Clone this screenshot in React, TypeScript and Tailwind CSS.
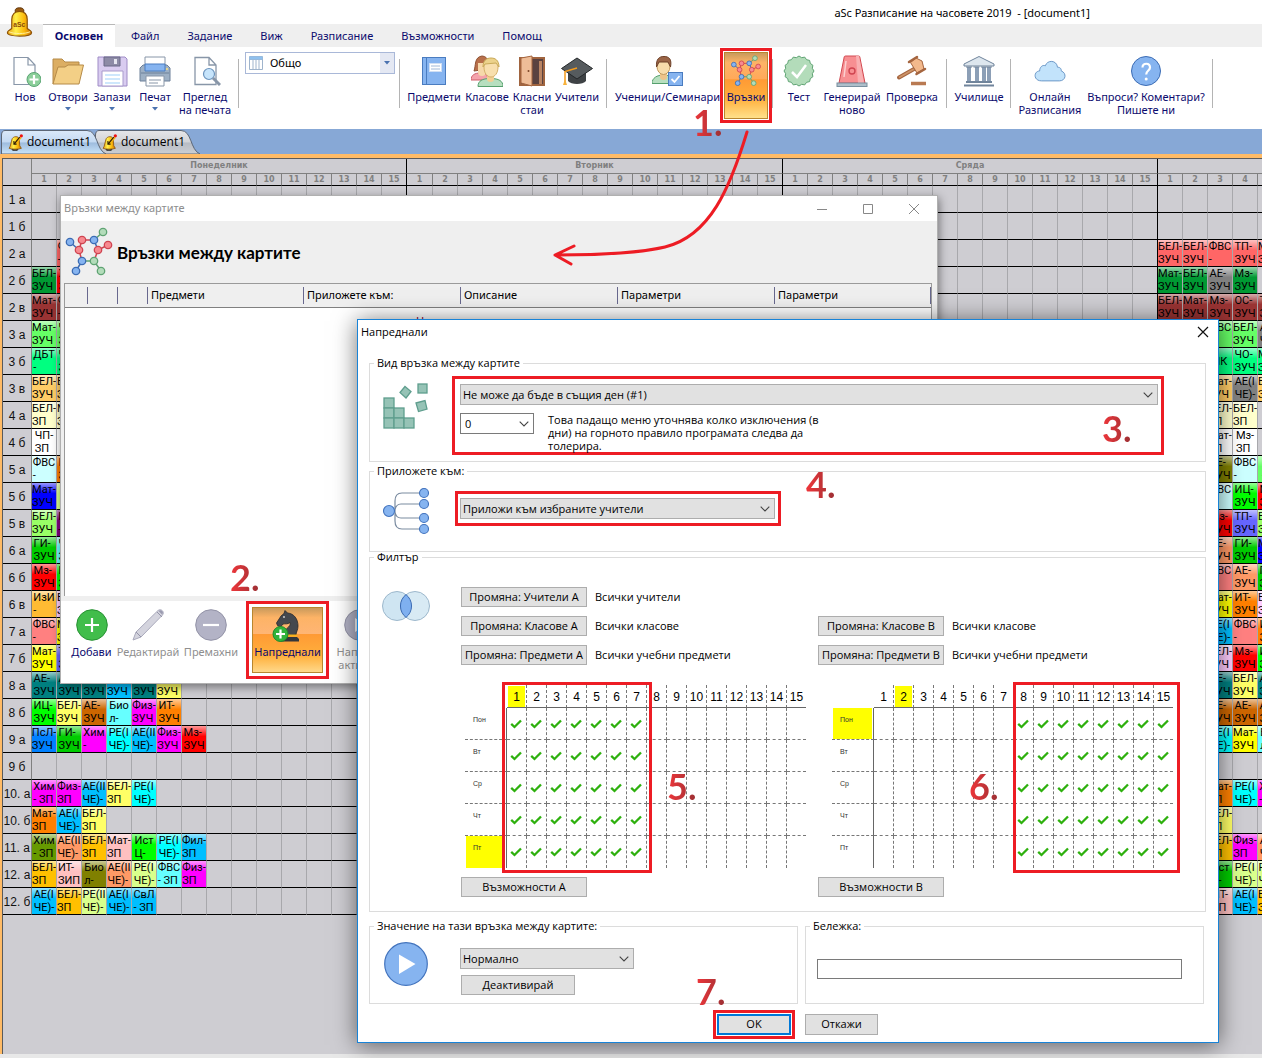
import React from 'react';

const UI = "font-['Noto_Sans','Open_Sans',sans-serif]";

/* ---------- palette of lesson cards ---------- */
const CARD: Record<string, string> = {
  r: 'bg-[#ff6666]', R: 'bg-[#ff0000]', g: 'bg-[#009933]', b: 'bg-[#993333]', l: 'bg-[#66ff66]',
  m: 'bg-[#00ff80]', o: 'bg-[#ffcc66]', y: 'bg-[#ffffcc]', w: 'bg-[#ffffff]', c: 'bg-[#ccffff]',
  B: 'bg-[#0000ff]', e: 'bg-[#99ff66]', G: 'bg-[#00cc00]', i: 'bg-[#ffbb33]', s: 'bg-[#ff8080]',
  Y: 'bg-[#ffff00]', t: 'bg-[#008080]', u: 'bg-[#00bfff]', f: 'bg-[#ffff66]', L: 'bg-[#00ff00]',
  n: 'bg-[#cc6600]', q: 'bg-[#66ffff]', M: 'bg-[#ff00ff]', O: 'bg-[#ff8000]', p: 'bg-[#0080ff]',
  C: 'bg-[#00ffff]', v: 'bg-[#669900]', x: 'bg-[#ff9966]', z: 'bg-[#ffc000]', P: 'bg-[#ffc0c0]',
  d: 'bg-[#808000]', h: 'bg-[#d9ff8c]', k: 'bg-[#808080]', V: 'bg-[#800080]', I: 'bg-[#6666ff]',
  W: 'bg-[#ffccff]',
};

/* class label, Monday cards, Thursday cards. A card is "colour first line/second line". */
const ROWS: [string, string, string][] = [
  ['1 а', '', ''],
  ['1 б', '', ''],
  ['2 а', ';r ФВС/-', 'r БЕЛ-/ЗУЧ;r БЕЛ-/ЗУЧ;r ФВС/-;r ТП-/ЗУЧ;r Мат-/ЗУЧ'],
  ['2 б', 'g БЕЛ-/ЗУЧ;R ХТ-/ЗУЧ', 'g Мат-/ЗУЧ;g БЕЛ-/ЗУЧ;k АЕ-/ЗУЧ;g Мз-/ЗУЧ'],
  ['2 в', 'b Мат-/ЗУЧ;b ФВС/-', 'b БЕЛ-/ЗУЧ;b Мат-/ЗУЧ;b Мз-/ЗУЧ;b ОС-/ЗУЧ;b ТП-/ЗУЧ'],
  ['3 а', 'l Мат-/ЗУЧ;l ЧО-/ЗУЧ', ';;l ФВС/-;l БЕЛ-/ЗУЧ;k АЕ-/ЧЕ)-'],
  ['3 б', 'm ДБТ/-;m ЧО-/ЗУЧ', ';;m ЧК;m ЧО-/ЗУЧ;m Мат-/ЗУЧ'],
  ['3 в', 'o БЕЛ-/ЗУЧ;o БЕЛ-/ЗУЧ', ';;o Мат-/ЗУЧ;k АЕ(I/ЧЕ)-;o БЕЛ-/ЗУЧ'],
  ['4 а', 'y БЕЛ-/ЗП;y Мат-/ЗП', ';;y БЕЛ-/ЗП;y БЕЛ-/ЗП'],
  ['4 б', 'w ЧП-/ЗП;w ЧО-/ЗП', ';;w Мат-/ЗП;w Мз-/ЗП'],
  ['5 а', 'c ФВС/-;O ИТ-/ЗУЧ', ';;d РЕ-/ЗУЧ;c ФВС/-;l ИТ-/-'],
  ['5 б', 'B Мат-/ЗУЧ;h РЕ-/ИЦ-', ';;c ФВС/-;L ИЦ-/ЗУЧ;R Мз-/ЗУЧ'],
  ['5 в', 'e БЕЛ-/ЗУЧ;V ИзИ/-', ';;R Мз-/ЗУЧ;I ТП-/ЗУЧ;e БЕЛ-/ЗУЧ'],
  ['6 а', 'G ГИ-/ЗУЧ;q ЧП-/ЗУЧ', ';;x АЕ-/ЗУЧ;G ГИ-/ЗУЧ;B Мат-/ЗУЧ'],
  ['6 б', 'R Мз-/ЗУЧ;L ИЦ-/ЗУЧ', ';;s ФВС/-;x АЕ-/ЗУЧ;G ГИ-/ЗУЧ'],
  ['6 в', 'i ИзИ/-;W БЕЛ-/ЗУЧ', ';;Y Мат-/ЗУЧ;O ИТ-/ЗУЧ;W БЕЛ-/ЗУЧ'],
  ['7 а', 's ФВС/-;Y Мат-/ЗУЧ', ';;u РЕ(I/ЧЕ)-;s ФВС/-;O ИТ-/ЗУЧ'],
  ['7 б', 'Y Мат-/ЗУЧ;I ТП-/ЗУЧ', ';;W БЕЛ-/ЗУЧ;R Мз-/ЗУЧ;L ИЦ-/ЗУЧ'],
  ['8 а', 't АЕ-/ЗУЧ;t АЕ-/ЗУЧ;t АЕ-/ЗУЧ;u Фил-/ЗУЧ;t АЕ-/ЗУЧ;f БЕЛ-/ЗУЧ', ';;t АЕ-/ЗУЧ;f БЕЛ-/ЗУЧ;t АЕ-/ЗУЧ'],
  ['8 б', 'L ИЦ-/ЗУЧ;f БЕЛ-/ЗУЧ;n АЕ-/ЗУЧ;q Био/л-;M Физ-/ЗУЧ;O ИТ-/ЗУЧ', ';;n АЕ-/ЗУЧ;n АЕ-/ЗУЧ;n АЕ-/ЗУЧ'],
  ['9 а', 'p ПсЛ-/ЗУЧ;G ГИ-/ЗУЧ;M Хим/-;C РЕ(I/ЧЕ)-;u АЕ(II/ЧЕ)-;M Физ-/ЗУЧ;R Мз-/ЗУЧ', ';;C РЕ(I/ЧЕ)-;Y Мат-/ЗУЧ;q Био/л-'],
  ['9 б', '', ''],
  ['10. а', 'M Хим/- ЗП;M Физ-/ЗП;u АЕ(II/ЧЕ)-;f БЕЛ-/ЗП;C РЕ(I/ЧЕ)-', ';;O Мат-/ЗП;C РЕ(I/ЧЕ)-;M Хим/- ЗП'],
  ['10. б', 'O Мат-/ЗП;u АЕ(I/ЧЕ)-;f БЕЛ-/ЗП', ';;f БЕЛ-/ЗП'],
  ['11. а', 'v Хим/- ЗП;x АЕ(II/ЧЕ)-;z БЕЛ-/ЗП;P Мат-/ЗП;L Ист/Ц-;C РЕ(I/ЧЕ)-;u Фил-/ЗП', ';;z БЕЛ-/ЗП;M Физ-/ЗП;x АЕ(I/ЧЕ)-'],
  ['12. а', 'z БЕЛ-/ЗП;P ИТ-/ЗИП;d Био/л-;x АЕ(II/ЧЕ)-;h РЕ(I/ЧЕ)-;q ФВС/- ЗП;M Физ-/ЗП', ';;G Ист/Ц-;h РЕ(I/ЧЕ)-;h РЕ(II/ЧЕ)-'],
  ['12. б', 'u АЕ(I/ЧЕ)-;z БЕЛ-/ЗП;h РЕ(II/ЧЕ)-;u АЕ(I/ЧЕ)-;u СвЛ/- ЗП', ';;P ИТ-/ЗП;u АЕ(I/ЧЕ)-;z БЕЛ-/ЗП'],
];

const DAYS: [string, number][] = [['Понеделник', 15], ['Вторник', 15], ['Сряда', 15], ['', 5]];
const COLS = DAYS.flatMap(([, n], d) => Array.from({ length: n }, (_, i) => ({ d, i, last: i === 14 })));

function Card({ code }: { code?: string }) {
  if (!code) return null;
  const lines = code.slice(2).split('/');
  return (
    <div className={`flex h-[26px] justify-center overflow-hidden ${CARD[code[0]]}`}>
      <div className="flex h-full w-full items-center justify-center bg-gradient-to-b from-white/60 to-transparent to-40%">
        <div className="whitespace-nowrap font-['Roboto',sans-serif] text-[11px] leading-[13px] text-black">
          {lines.map((l, i) => <div key={i}>{l}</div>)}
        </div>
      </div>
    </div>
  );
}

function Timetable() {
  return (
    <table className="border-separate border-spacing-0">
      <thead className="text-[#808080]">
        <tr>
          <th rowSpan={2} className="border-r border-b border-r-[#808080] border-b-black p-0"><div className="w-[28px]" /></th>
          {DAYS.map(([name, n], d) => (
            <th key={d} colSpan={n} className="h-[15px] border-r border-b border-r-black border-b-[#808080] p-0 text-center font-['DejaVu_Sans',sans-serif] text-[8px] leading-[14px] font-bold">{name}</th>
          ))}
        </tr>
        <tr>
          {COLS.map((c, k) => (
            <th key={k} className={`h-[12px] border-r border-b border-b-black p-0 text-center font-['DejaVu_Sans',sans-serif] text-[8px] leading-[11px] font-bold ${c.last ? 'border-r-black' : 'border-r-[#808080]'}`}>{c.i + 1}</th>
          ))}
        </tr>
      </thead>
      <tbody>
        {ROWS.map(([label, mon, thu]) => {
          const cards = [mon.split(';'), [], [], thu.split(';')];
          return (
            <tr key={label}>
              <th scope="row" className="border-r border-b border-r-[#808080] border-b-black p-0 pt-[2px] text-center font-['Liberation_Sans',sans-serif] text-[12px] leading-[18px] font-normal text-[#111]">{label}</th>
              {COLS.map((c, k) => (
                <td key={k} className={`border-r border-b border-b-black p-0 ${c.last ? 'border-r-black' : 'border-r-[#a8a8ac]'}`}>
                  <div className={k === 15 ? 'h-[26px] w-[25px]' : 'h-[26px] w-[24px]'}><Card code={cards[c.d][c.i]} /></div>
                </td>
              ))}
            </tr>
          );
        })}
      </tbody>
    </table>
  );
}

/* ---------- icons ---------- */
const S = 'block size-[32px]';

const Bell = ({ className, pen }: { className: string; pen?: boolean }) => (
  <svg viewBox="0 0 28 32" className={className} aria-hidden="true">
    <defs>
      <linearGradient id="bellGold" x1="0" x2="1">
        <stop offset="0" stopColor="#e89a10" /><stop offset=".35" stopColor="#fff04a" /><stop offset=".7" stopColor="#fbb90c" /><stop offset="1" stopColor="#c86f08" />
      </linearGradient>
    </defs>
    {pen ? (
      <>
        <path d="M7 28a6 3.500 0 0 0 12 0z" fill="#555" stroke="#222" />
        <path d="M4 23L7 11C8 7 11 5 15 5S20 7 21 11L22 22L25 27C20 29 6 29 2 27Z" fill="url(#bellGold)" stroke="#8a5208" strokeWidth="1.500" />
        <path d="M24 6L14 17" stroke="#f6b40e" strokeWidth="4.500" fill="none" /><path d="M22 6L12 18M11 13v6h5" stroke="#2a1a05" strokeWidth="2" fill="none" />
        <circle cx="25" cy="3.500" r="3" fill="#e11" />
      </>
    ) : (
      <>
        <ellipse cx="14" cy="4" rx="4.500" ry="3.200" fill="#9a5a12" stroke="#5b3208" />
        <path d="M6 22V13C6 7 9.500 4.500 14 4.500S22 7 22 13V22C23 23.500 26.500 24 26.500 26.500C26.500 29 20 30 14 30S1.500 29 1.500 26.500C1.500 24 5 23.500 6 22Z" fill="url(#bellGold)" stroke="#8a5208" strokeWidth="1.200" />
        <path d="M3 25.500C8 28 20 28 25 25.500" fill="none" stroke="#fff2a0" strokeWidth="1" />
        <text x="7.500" y="21" fontSize="7" fontWeight="bold" fontFamily="Liberation Sans" fill="#8a4a08">aSc</text>
      </>
    )}
  </svg>
);
const page = <path d="M6 2.500H20L27 10V29.500H6Z M20 2.500V10H27" fill="#fff" stroke="#8896a8" strokeWidth="1.300" />;
const NewI = () => <svg viewBox="0 0 32 32" className={S}><path d="M5 2.500H19L26 10V29.500H5Z M19 2.500V10H26" fill="#fff" stroke="#8896a8" strokeWidth="1.200" /><circle cx="25" cy="24.500" r="7" fill="#8ccf9a" stroke="#5aa574" /><path d="M25 20v9M20.500 24.500h9" stroke="#fff" strokeWidth="2.200" /></svg>;
const OpenI = () => <svg viewBox="0 0 32 32" className={S}><path d="M1 29V4H10L13 7H27V12" fill="#dcae63" stroke="#b58a48" /><path d="M1 29L6 12H13L16 10H31.500L27 29Z" fill="#f3cf86" stroke="#b58a48" /></svg>;
const SaveI = () => <svg viewBox="0 0 32 32" className={S}><path d="M2 2H29L31 4V31H2Z" fill="#d9ccf0" stroke="#9f8cc6" /><path d="M8 2H24V11H8Z" fill="#8d8ba6" stroke="#6a6888" /><path d="M18 4h3v5h-3z" fill="#e6e6f0" /><path d="M6 16H27V31H6Z" fill="#fff" stroke="#a99bcc" /><path d="M9 20h15M9 24h15M9 28h15" stroke="#bfe0fb" strokeWidth="1.500" /></svg>;
const PrintI = () => <svg viewBox="0 0 32 32" className={S}><path d="M6 2H26V11H6Z" fill="#fff" stroke="#8896a8" /><path d="M1 13L4 10H28L31 13V26H1Z" fill="#9db0c5" stroke="#6c8099" /><path d="M6 9H26V16H6Z" fill="#86b4f0" stroke="#4a7cc0" /><path d="M2 18H30" stroke="#6c8099" /><path d="M7 21H25V31H7Z" fill="#fff" stroke="#8896a8" /><path d="M10 25h12M10 28h9" stroke="#8896a8" /><circle cx="28" cy="14" r="1" fill="#ffe27a" /></svg>;
const PreviewI = () => <svg viewBox="0 0 32 32" className={S}>{page}<circle cx="20" cy="19" r="5.500" fill="#c6e4fb" stroke="#6c94bd" strokeWidth="1.200" /><path d="M24 23L31 30" stroke="#8896a8" strokeWidth="3" /></svg>;
const BookI = () => <svg viewBox="0 0 32 32" className={S}><rect x="4.500" y="2.500" width="23" height="27" fill="#86b4f0" stroke="#4a7cc0" /><path d="M8.500 3v26" stroke="#4a7cc0" /><rect x="11.500" y="8.500" width="12" height="8" fill="#fff" stroke="#d0dff4" /><path d="M13 11h9M13 14h9" stroke="#a0b8d8" /></svg>;
const ClassI = () => <svg viewBox="0 0 32 32" className={S}><path d="M0 25C0 20 4 18 9 18S17 20 17 25Z" fill="#f4a3ab" stroke="#cf5f6b" /><path d="M3 16C5 11 3 2 11 1C18 1.500 17 8 17 14Z" fill="#b86f4a" stroke="#8f5234" /><path d="M7 8h8v9a4 4 0 0 1-8 0z" fill="#f6d8aa" /><path d="M7 31.500C7 26 11 23.500 19.500 23.500S32 26 32 31.500Z" fill="#b7dfbf" stroke="#55a06d" /><path d="M16 19h7v5a3.500 3 0 0 1-7 0z" fill="#f2cf94" /><path d="M13 12C13 6 15 3.500 20 3.500S27 6 27 12C27 18 24 22 20 22S13 18 13 12Z" fill="#f8dfae" stroke="#d4b06a" /><path d="M12 12C12 5 16 3 20 3S28 5 28 12L25 8 14 9Z" fill="#ecd28b" stroke="#c9aa5a" /></svg>;
const DoorI = () => <svg viewBox="0 0 32 32" className={S}><path d="M4 3H28V30H4Z" fill="#5a4240" stroke="#a0643f" strokeWidth="2" /><path d="M23 6h3v23h-3z" fill="#b98463" /><path d="M5 3L16 1V31L5 28Z" fill="#eebd98" stroke="#a5653f" /><circle cx="12.500" cy="16" r="1" fill="#7b4426" /></svg>;
const CapI = () => <svg viewBox="0 0 32 32" className={S}><path d="M7 15V26C10 30 22 30 25 26V15Z" fill="#3e4245" /><path d="M16 3L31.500 13.500L16 24L.500 13.500Z" fill="#565b5e" stroke="#25282a" /><path d="M16 13L4 16.500V27" fill="none" stroke="#f39a1c" strokeWidth="1.500" /><path d="M4 24L6 30H2Z" fill="#f7b23c" /></svg>;
const PupilI = () => <svg viewBox="0 0 32 32" className={S}><path d="M0 28.500C0 23 5 20 11.500 20S23 23 23 28.500Z" fill="#b7dfbf" stroke="#55a06d" /><path d="M8 16h7v6a3.500 3 0 0 1-7 0z" fill="#eec38a" /><ellipse cx="11.500" cy="11.500" rx="6.500" ry="8" fill="#f8dcab" stroke="#c29a5c" /><path d="M4.500 12C4 4 7 1.500 12 1.500S20 4 18.500 12L16 7 7 7Z" fill="#9b6547" stroke="#6d4028" /><rect x="16.500" y="17.500" width="14" height="13" fill="#86b4f0" stroke="#4a7cc0" /><path d="M19.500 24l3 3 5-6" fill="none" stroke="#fff" strokeWidth="1.800" /></svg>;
const NF = ['#86b4f0', '#f78a90', '#b3dcba'], NS = ['#3c6cb4', '#cf4450', '#5fa373'];
const NODES: [number, number, number][] = [[7, 9, 0], [16, 17, 1], [19, 7, 1], [31, 7, 0], [40, -1, 2], [45, 12, 1], [35, 17, 1], [31, 28, 2], [19, 28, 0], [13, 38, 0], [38, 38, 2]];
/* start node, end node, colour */
const LINKS = [[0, 1, 0], [1, 2, 1], [2, 3, 1], [3, 4, 2], [3, 6, 0], [6, 5, 1], [6, 7, 1], [7, 8, 2], [8, 1, 1], [8, 9, 0], [7, 10, 2]];
const NetI = ({ className }: { className: string }) => (
  <svg viewBox="2 -6 48 50" className={className} aria-hidden="true">
    {LINKS.map(([a, b, c], i) => <line key={i} x1={NODES[a][0]} y1={NODES[a][1]} x2={NODES[b][0]} y2={NODES[b][1]} stroke={NS[c]} strokeWidth="1.500" />)}
    {NODES.map(([x, y, c], i) => <circle key={i} cx={x} cy={y} r="3.700" fill={NF[c]} stroke={NS[c]} strokeWidth="1.300" />)}
  </svg>
);
const SEAL = Array.from({ length: 32 }, (_, i) => {
  const a = (i * Math.PI) / 16, r = i % 2 ? 13.6 : 15;
  return `${(16 + r * Math.cos(a)).toFixed(1)},${(16 + r * Math.sin(a)).toFixed(1)}`;
}).join(' ');
const TestI = () => <svg viewBox="0 0 32 32" className={S}><polygon points={SEAL} fill="#b3dcba" stroke="#5fa373" /><path d="M9 17l5 5 9-12" fill="none" stroke="#fff" strokeWidth="2.500" /></svg>;
const AlarmI = () => <svg viewBox="0 0 32 32" className={S}><path d="M3 28L8 3C8 1 9 1 10 1H22C23 1 24 1 24 3L29 28Z" fill="#f78f92" stroke="#d24a52" /><path d="M20 1h3l5 27h-6z" fill="#f9b0b2" /><path d="M10 6L8 22" stroke="#fcd0d0" strokeWidth="1.500" /><circle cx="16" cy="16" r="3" fill="none" stroke="#cf4450" strokeWidth="1.400" /><rect x="1" y="28" width="30" height="3.500" fill="#aebfca" stroke="#7890a0" /></svg>;
const GavelI = () => <svg viewBox="0 0 32 32" className={S}><path d="M18 14L3 22.500" stroke="#a5653f" strokeWidth="4" strokeLinecap="round" /><path d="M18 14L3 22.500" stroke="#cd9468" strokeWidth="2" /><path d="M14.500 7.500L20 3L26 6L28 14L21 18Z" fill="#f3b98c" stroke="#a5653f" /><path d="M13 7L21 2M20.500 19L29 14" stroke="#a5653f" strokeWidth="2.500" strokeLinecap="round" /><path d="M15 28.500H30" stroke="#b97a52" strokeWidth="3.500" /></svg>;
const SchoolI = () => <svg viewBox="0 0 32 32" className={S}><path d="M1 9L16 1.500L31 9V11H1Z" fill="#dde6ee" stroke="#70849b" /><path d="M5 12v15M7 12v15M13 12v15M15 12v15M20 12v15M22 12v15M27 12v15M25 12v15" stroke="#8c9fb6" strokeWidth="2" /><path d="M3 27H29M1 30.500H31" stroke="#70849b" strokeWidth="2" /><path d="M3 12h6M10.500 12h6M18 12h6M24 12h5" stroke="#70849b" /></svg>;
const CloudI = () => <svg viewBox="0 0 34 32" className={S}><path d="M8 26.500C-1 26.500-.500 16 6 16C6 12 9 9 12 10.500C14 4 24 4 25 12C29 12 29 15 29 16C35 18 34 26.500 27 26.500Z" fill="#c2e3fb" stroke="#6593c4" /></svg>;
const HelpI = () => <svg viewBox="0 0 32 32" className={S}><circle cx="16" cy="16" r="14.500" fill="#86b4f0" stroke="#3c6cb4" /><path d="M12.500 12.500C12.500 7.500 20 7.500 20 12.500C20 15.500 16.200 15.500 16.200 19.500" fill="none" stroke="#fff" strokeWidth="2.200" /><circle cx="16.200" cy="24" r="1.500" fill="#fff" /></svg>;

const Chevron = () => (
  <svg viewBox="0 0 10 6" className="pointer-events-none absolute right-[4px] h-[6px] w-[10px]"><path d="M.700.700L5 5L9.300.700" fill="none" stroke="#444" strokeWidth="1.100" /></svg>
);
const Drop = () => <svg viewBox="0 0 6 4" className="mt-[4px] h-[4px] w-[6px]"><path d="M0 0h6L3 3.500z" fill="#4a72b0" /></svg>;

/* ---------- ribbon ---------- */
function Tool({ icon, label, sub, drop, w, pressed }: { icon: React.ReactNode; label: string; sub?: string; drop?: boolean; w: string; pressed?: boolean }) {
  return (
    <button type="button" className={`flex shrink-0 flex-col items-center whitespace-nowrap text-[11px] leading-[13px] text-[#0b0b6e] ${w} ${pressed ? 'h-[67px] border border-[#b8862e] bg-[linear-gradient(#c99a5c,#fdb366_15%,#ffa95a_40%,#ff9a35_41%,#ffb03c_70%,#ffe08a)] pt-[2px]' : 'pt-[8px]'}`}>
      {icon}
      <span className="mt-[3px]">{label}</span>
      {sub && <span>{sub}</span>}
      {drop && <Drop />}
    </button>
  );
}
const Sep = ({ m }: { m: string }) => <div className={`mt-[12px] h-[49px] w-px shrink-0 bg-[#b4b4b4] ${m}`} />;

function Ribbon() {
  return (
    <div className="flex h-[82px] items-start bg-white pl-1">
      <Tool icon={<NewI />} label="Нов" w="w-[42px]" />
      <Tool icon={<OpenI />} label="Отвори" drop w="w-[44px]" />
      <Tool icon={<SaveI />} label="Запази" drop w="w-[44px]" />
      <Tool icon={<PrintI />} label="Печат" drop w="w-[42px]" />
      <Tool icon={<PreviewI />} label="Преглед" sub="на печата" w="w-[58px]" />
      <Sep m="ml-1" />
      <div className="relative mt-[5px] ml-[6px] flex h-[22px] w-[150px] shrink-0 items-center border border-[#a9b8d8] bg-white">
        <svg viewBox="0 0 14 14" className="absolute left-[3px] size-[14px]"><path d="M.500.500h13v13H.500zM.500 3.500h13M4 3v11M7 3v11M10 3v11" fill="#fff" stroke="#9fb4cc" /><path d="M.500.500h13v3H.500z" fill="#8fc0ee" /></svg>
        <select aria-label="Изглед" className="h-full w-full appearance-none bg-transparent pl-[24px] text-[11px] text-black outline-none"><option>Общо</option></select>
        <span className="pointer-events-none absolute right-0 flex h-full w-[14px] items-center justify-center bg-[#e4e8f3]"><svg viewBox="0 0 6 4" className="h-[4px] w-[6px]"><path d="M0 0h6L3 3.500z" fill="#4a72b0" /></svg></span>
      </div>
      <Sep m="ml-1" />
      <Tool icon={<BookI />} label="Предмети" w="ml-[7px] w-[54px]" />
      <Tool icon={<ClassI />} label="Класове" w="w-[52px]" />
      <Tool icon={<DoorI />} label="Класни" sub="стаи" w="w-[38px]" />
      <Tool icon={<CapI />} label="Учители" w="w-[52px]" />
      <Sep m="ml-[3px]" />
      <Tool icon={<PupilI />} label="Ученици/Семинари" w="ml-2 w-[105px]" />
      <div className="mt-px h-[75px] w-[52px] shrink-0 border-[3px] border-[#ed1c24] p-px">
        <Tool icon={<NetI className="size-[32px]" />} label="Връзки" w="w-[44px]" pressed />
      </div>
      <Sep m="" />
      <Tool icon={<TestI />} label="Тест" w="ml-[2px] w-[48px]" />
      <Tool icon={<AlarmI />} label="Генерирай" sub="ново" w="w-[58px]" />
      <Tool icon={<GavelI />} label="Проверка" w="w-[62px]" />
      <Sep m="ml-[3px]" />
      <Tool icon={<SchoolI />} label="Училище" w="ml-px w-[62px]" />
      <Sep m="" />
      <Tool icon={<CloudI />} label="Онлайн" sub="Разписания" w="w-[78px]" />
      <Tool icon={<HelpI />} label="Въпроси? Коментари?" sub="Пишете ни" w="w-[114px]" />
      <Sep m="ml-[9px]" />
    </div>
  );
}

function DocTab({ active }: { active?: boolean }) {
  return (
    <button type="button" className={`relative flex h-[24px] w-[106px] items-center pl-[7px] text-[12px] text-black ${active ? 'z-10' : '-ml-[12px]'}`}>
      <svg viewBox="0 0 106 24" className="absolute inset-0 h-full w-full" preserveAspectRatio="none" aria-hidden="true">
        <defs><linearGradient id={active ? 'tabA' : 'tabB'} x1="0" x2="0" y1="0" y2="1"><stop offset="0" stopColor={active ? '#dbe9f9' : '#e6e6e8'} /><stop offset=".5" stopColor={active ? '#c3d9f2' : '#d2d4d8'} /><stop offset=".52" stopColor={active ? '#9dbbdd' : '#b8bcc4'} /><stop offset="1" stopColor={active ? '#c9e4fa' : '#cccfd4'} /></linearGradient></defs>
        <path d="M.500 24V5C.500 2 2 .500 4 .500H86C97 .500 95 20 105 24Z" fill={`url(#${active ? 'tabA' : 'tabB'})`} stroke="#5c6675" />
      </svg>
      <Bell pen className="relative h-[17px] w-[15px]" />
      <span className="relative ml-[4px] font-['Open_Sans','Noto_Sans',sans-serif]">document1</span>
    </button>
  );
}

/* ---------- relations window ---------- */
function RelationsWindow() {
  const cap = 'flex h-full items-center pl-[3px] border-r border-[#68688e]';
  return (
    <section className="absolute top-[195px] left-[60px] flex w-[878px] flex-col border border-[#b0b0b0] bg-white shadow-[1px_3px_9px_rgba(0,0,0,.45)]" aria-label="Връзки между картите">
      <header className="flex h-[25px] items-center justify-between pl-[3px] text-[11px] text-[#8e8e8e]">
        <span>Връзки между картите</span>
        <div className="flex gap-[34px] pr-[17px]">
          <button type="button" aria-label="Минимизирай"><svg viewBox="0 0 12 12" className="size-[12px]"><path d="M1 6.500h10" stroke="#888" /></svg></button>
          <button type="button" aria-label="Максимизирай"><svg viewBox="0 0 12 12" className="size-[12px]"><path d="M1.500 1.500h9v9h-9z" fill="none" stroke="#888" /></svg></button>
          <button type="button" aria-label="Затвори"><svg viewBox="0 0 12 12" className="size-[12px]"><path d="M1 1l10 10M11 1L1 11" stroke="#888" /></svg></button>
        </div>
      </header>
      <div className="bg-[#efefef] pb-[5px] pl-[3px] pr-[5px]">
        <div className="flex h-[62px] items-center">
          <NetI className="size-[50px]" />
          <h2 className="ml-[3px] pt-[2px] font-['Lato','Open_Sans',sans-serif] text-[17px] font-bold text-black">Връзки между картите</h2>
        </div>
        <div className="h-[313px] border border-b-0 border-[#9a9a9a] bg-white">
          <div className="grid h-[24px] grid-cols-[23px_30px_30px_156px_157px_157px_157px_156px] border-b border-[#808080] bg-[#efefef] py-[3px] text-[11px] text-black">
            {['', '', '', 'Предмети', 'Приложете към:', 'Описание', 'Параметри', 'Параметри'].map((t, i) => <div key={i} className={cap}>{t}</div>)}
          </div>
          <p className="pt-[5px] pl-[351px] text-[11px] text-[#8b0030]">Няма</p>
        </div>
      </div>
      <div className="flex h-[82px] items-start overflow-hidden text-[11px] leading-[13px] whitespace-nowrap text-[#8f8f8f]">
        <button type="button" className="flex w-[54px] flex-col items-center pt-[8px] pl-[7px] text-[#0b0b6e]">
          <svg viewBox="0 0 32 32" className={S}><circle cx="16" cy="16" r="15.300" fill="#41bd4b" stroke="#279133" /><path d="M16 9v14M9 16h14" stroke="#fff" strokeWidth="2.200" /></svg><span className="mt-[4px]">Добави</span>
        </button>
        <button type="button" className="flex w-[66px] flex-col items-center pt-[8px]">
          <svg viewBox="0 0 32 32" className={S}><path d="M1 31L4 23L26 1.500C29-1 33 3 30.500 6L9 28Z" fill="#d4d4de" stroke="#aaaabc" /><path d="M4 23l5 5M25 3l5 5" stroke="#9494a8" /><path d="M26.500 2C29-.500 32.500 3 30 5.500Z" fill="#9b9bb0" /></svg><span className="mt-[4px]">Редактирай</span>
        </button>
        <button type="button" className="flex w-[60px] flex-col items-center pt-[8px]">
          <svg viewBox="0 0 32 32" className={S}><circle cx="16" cy="16" r="15.300" fill="#b3b3c6" stroke="#9292a6" /><path d="M8 16h16" stroke="#fff" strokeWidth="2.200" /></svg><span className="mt-[4px]">Премахни</span>
        </button>
        <div className="ml-[5px] h-[78px] w-[83px] shrink-0 border-[3px] border-[#ed1c24] p-[3px]">
          <button type="button" className="flex h-[66px] w-full flex-col items-center border border-[#b8862e] bg-[linear-gradient(#c99a5c,#fdb366_15%,#ffb574_40%,#ff9a35_41%,#ffb03c_75%,#ffd88a)] pt-[2px] text-[#0b0b6e]">
            <svg viewBox="0 0 32 32" className={S}>
              <path d="M10 26C10 20 20 17 18 12.500C16 14.500 13 13.500 11 14L8.500 17L5.500 15.500L4.500 13L9 6L12 3.500L13 .500L15.500 3C22 3.500 26 9 26 16C26 20 24 22 24 25Z" fill="#45484e" stroke="#25272b" strokeWidth=".8" />
              <circle cx="12" cy="7" r=".9" fill="#ddd" />
              <path d="M10 25.500h15" stroke="#f7b21d" strokeWidth="2" /><path d="M9 27h16l2 2v2.500H8z" fill="#33363b" />
              <circle cx="8.500" cy="24" r="7.500" fill="#30b33c" stroke="#1f8a2a" /><path d="M8.500 19.500v9M4 24h9" stroke="#fff" strokeWidth="2.200" />
            </svg>
            <span className="mt-[3px]">Напреднали</span>
          </button>
        </div>
        <button type="button" className="flex w-[62px] flex-col items-center pt-[8px]">
          <svg viewBox="0 0 32 32" className={S}><circle cx="16" cy="16" r="15.300" fill="#b3b3c6" stroke="#9292a6" /><path d="M11 9v14l12-7z" fill="#fff" /></svg><span className="mt-[4px]">Направи</span><span>активно</span>
        </button>
      </div>
    </section>
  );
}

/* ---------- advanced dialog ---------- */
function Combo({ id, value, label, cls, field }: { id: string; value: string; label: string; cls: string; field?: boolean }) {
  return (
    <div className={`relative flex h-[21px] items-center border ${field ? 'border-[#7a7a7a] bg-white' : 'border-[#adadad] bg-[#e1e1e1]'} ${cls}`}>
      <select id={id} aria-label={label} className={`h-full w-full appearance-none bg-transparent text-[11px] leading-[19px] text-black outline-none ${field ? 'pl-[4px]' : 'pl-[2px]'}`}><option>{value}</option></select>
      <Chevron />
    </div>
  );
}
const Push = ({ children, cls }: { children: React.ReactNode; cls: string }) => (
  <button type="button" className={`flex shrink-0 items-center justify-center border border-[#adadad] bg-[#e1e1e1] whitespace-nowrap text-black ${cls}`}>{children}</button>
);
const Legend = ({ children }: { children: React.ReactNode }) => <legend className="px-[3px] leading-[14px]">{children}</legend>;

function Periods({ name, col, row, from, to, mark }: { name: string; col: number; row: number; from: number; to: number; mark: string }) {
  const n = Array.from({ length: 15 }, (_, i) => i + 1);
  return (
    <div className="relative w-max font-['Liberation_Sans',sans-serif]">
      <table className="border-separate border-spacing-0" aria-label={name}>
        <thead>
          <tr>
            <td className="p-0" />
            {n.map(i => (
              <th key={i} scope="col" className={`border-b border-b-[#666] p-0 font-normal ${i < 15 ? 'border-r border-dashed border-r-[#777] [border-bottom-style:solid]' : ''}`}>
                <div className={`mx-px mt-px flex h-[21px] w-[17px] items-center justify-center text-[12px] text-black ${i === col ? 'bg-[#ffff00]' : ''}`}>{i}</div>
              </th>
            ))}
          </tr>
        </thead>
        <tbody>
          {['Пон', 'Вт', 'Ср', 'Чт', 'Пт'].map((d, r) => (
            <tr key={d}>
              <th scope="row" className={`border-r border-r-[#666] p-0 text-left font-normal ${r < 4 ? 'border-b border-b-[#777] [border-bottom-style:dashed]' : ''}`}>
                <div className={`mx-px w-[39px] pt-[5px] pl-[7px] text-[7px] leading-[14px] text-[#333] ${r < 4 ? 'h-[31px]' : 'h-[32px]'} ${r === row ? 'bg-[#ffff00]' : ''}`}>{d}</div>
              </th>
              {n.map(i => (
                <td key={i} className={`border-dashed border-[#777] p-0 ${i < 15 ? 'border-r' : ''} ${r < 4 ? 'border-b' : ''}`}>
                  {i >= from && i <= to && <svg viewBox="0 0 12 10" className="mx-[3px] h-[10px] w-[12px]" aria-label="да"><path d="M1.200 4.800L4.500 8L11 1.500" fill="none" stroke="#2eb00e" strokeWidth="2.300" /></svg>}
                </td>
              ))}
            </tr>
          ))}
        </tbody>
      </table>
      <div className={`pointer-events-none absolute -top-[3px] -bottom-[5px] border-[3px] border-[#ed1c24] ${mark}`} />
    </div>
  );
}

const FilterRow = ({ b, t }: { b: string; t: string }) => (
  <div className="flex items-center"><Push cls="h-[20px] w-[126px]">{b}</Push><span className="ml-[8px]">{t}</span></div>
);
const SQ = [[0, 0], [0, 10], [10, 10], [0, 20], [10, 20], [20, 20]];

function AdvancedDialog() {
  const set = 'border border-[#dcdcdc] px-1';
  return (
    <section role="dialog" aria-label="Напреднали" className="absolute top-[319px] left-[357px] w-[862px] border border-[#1883d7] bg-white font-['Open_Sans','Noto_Sans',sans-serif] text-[11px] text-black shadow-[0_2px_22px_rgba(0,0,0,.55)]">
      <header className="flex h-[24px] items-center justify-between pr-[9px] pl-[3px]">
        <span>Напреднали</span>
        <button type="button" aria-label="Затвори"><svg viewBox="0 0 12 12" className="size-[12px]"><path d="M1 1l10 10M11 1L1 11" stroke="#111" strokeWidth="1.200" /></svg></button>
      </header>
      <div className="pt-[12px] pr-[12px] pb-[3px] pl-[11px]">
        <fieldset className={`${set} pb-[6px]`}>
          <Legend>Вид връзка между картите</Legend>
          <div className="flex items-start pt-[6px]">
            <div className="w-[78px] shrink-0 pt-[7px] pl-[9px]">
              <svg viewBox="0 0 46 46" className="size-[46px]" fill="#96c3b6" stroke="#5f9e8e" strokeWidth="1.300">
                {SQ.map(([x, y]) => <rect key={`${x}-${y}`} x={x + 1} y={y + 15} width="10" height="10" />)}
                <rect x="35" y="1" width="9" height="9" />
                <path d="M22 3.500L28 8.500L23 15L17 9.500Z M33 20L42 17.500L44 26L35.500 28.500Z" />
              </svg>
            </div>
            <div className="mr-[37px] flex-1 border-[3px] border-[#ed1c24] pt-[5px] pr-[3px] pl-[5px]">
              <Combo id="kind" label="Вид връзка" value="Не може да бъде в същия ден (#1)" cls="w-full" />
              <div className="mt-2 flex items-start">
                <Combo id="exceptions" label="Изключения" value="0" cls="w-[74px]" field />
                <label htmlFor="exceptions" className="ml-[14px] w-[272px] leading-[13px]">Това падащо меню уточнява колко изключения (в дни) на горното правило програмата следва да толерира.</label>
              </div>
            </div>
          </div>
        </fieldset>

        <fieldset className={`${set} mt-[2px] h-[88px]`}>
          <Legend>Приложете към:</Legend>
          <div className="flex items-start pt-[9px]">
            <div className="w-[81px] shrink-0 pl-[7px]">
              <svg viewBox="0 0 48 48" className="size-[48px]">
                <path d="M8 24H11M41 6H21Q14 6 14 14V34Q14 42 21 42H41M41 17H20Q15 17 14 23M41 31H20Q15 31 14 25" fill="none" stroke="#7a8ba0" strokeWidth="1.200" />
                <g fill="#86b4f0" stroke="#4273bd" strokeWidth="1.100"><circle cx="8" cy="24" r="5.500" /><circle cx="43" cy="6" r="4.500" /><circle cx="43" cy="17" r="4.500" /><circle cx="43" cy="31" r="4.500" /><circle cx="43" cy="42" r="4.500" /></g>
              </svg>
            </div>
            <div className="mt-1 border-[3px] border-[#ed1c24] py-1 pr-[3px] pl-[2px]">
              <Combo id="apply" label="Приложете към" value="Приложи към избраните учители" cls="w-[315px]" />
            </div>
          </div>
        </fieldset>

        <fieldset className={`${set} -mt-[2px] pb-[14px]`}>
          <Legend>Филтър</Legend>
          <div className="flex items-start pt-[23px]">
            <div className="w-[87px] shrink-0 pt-[3px] pl-[7px]">
              <svg viewBox="0 0 50 32" className="h-[32px] w-[50px]"><circle cx="16" cy="16" r="14.500" fill="#cfe5f2" stroke="#9db8cc" /><circle cx="34" cy="16" r="14.500" fill="#d8eaf4" stroke="#9db8cc" /><path d="M25 4.600A14.500 14.500 0 0 1 25 27.400A14.500 14.500 0 0 1 25 4.600Z" fill="#7fb0f0" stroke="#3c6cb4" /></svg>
            </div>
            <div className="flex w-[357px] shrink-0 flex-col gap-[9px]">
              <FilterRow b="Промяна: Учители А" t="Всички учители" />
              <FilterRow b="Промяна: Класове А" t="Всички класове" />
              <FilterRow b="Промяна: Предмети А" t="Всички учебни предмети" />
              <div className="mt-[11px] ml-1"><Periods name="Часове А" col={1} row={4} from={1} to={7} mark="left-[37px] w-[150px]" /></div>
              <Push cls="h-[20px] w-[126px]">Възможности А</Push>
            </div>
            <div className="flex flex-col gap-[9px] pt-[29px]">
              <FilterRow b="Промяна: Класове В" t="Всички класове" />
              <FilterRow b="Промяна: Предмети В" t="Всички учебни предмети" />
              <div className="mt-[11px] ml-[14px]"><Periods name="Часове В" col={2} row={0} from={8} to={15} mark="left-[181px] w-[167px]" /></div>
              <Push cls="h-[20px] w-[126px]">Възможности В</Push>
            </div>
          </div>
        </fieldset>

        <div className="mt-[7px] flex gap-[7px] pr-[2px]">
          <fieldset className={`${set} h-[85px] w-[429px]`}>
            <Legend>Значение на тази връзка между картите:</Legend>
            <div className="flex pt-[9px]">
              <div className="w-[86px] shrink-0 pl-[10px]">
                <svg viewBox="0 0 44 44" className="size-[44px]"><circle cx="22" cy="22" r="21.300" fill="#86b4f0" stroke="#4273bd" strokeWidth="1.200" /><path d="M15 12.500V32L31.500 22Z" fill="#fff" /></svg>
              </div>
              <div className="flex flex-col gap-[6px] pt-[6px]">
                <Combo id="importance" label="Значение" value="Нормално" cls="w-[174px]" />
                <Push cls="ml-px h-[20px] w-[114px]">Деактивирай</Push>
              </div>
            </div>
          </fieldset>
          <fieldset className={`${set} h-[85px] flex-1`}>
            <Legend>Бележка:</Legend>
            <div className="pt-[26px] pr-[17px] pl-[7px]"><input aria-label="Бележка" type="text" className="block h-[20px] w-full border border-[#7a7a7a] bg-white px-1 outline-none" /></div>
          </fieldset>
        </div>

        <div className="mt-[6px] ml-[344px] flex items-center gap-[10px]">
          <div className="border-[3px] border-[#ed1c24] p-px">
            <button type="button" className="flex h-[21px] w-[74px] items-center justify-center border-2 border-[#0078d7] bg-[#e1e1e1] text-black">OK</button>
          </div>
          <Push cls="h-[21px] w-[73px]">Откажи</Push>
        </div>
      </div>
    </section>
  );
}

const STEP = "absolute bg-gradient-to-r from-[#f0353a] to-[#9c2f33] bg-clip-text font-['Lato','Open_Sans',sans-serif] text-[36px] leading-[36px] font-bold text-transparent";

export default function App() {
  return (
    <main className={`relative flex min-h-screen flex-col overflow-hidden bg-white ${UI}`}>
      <div className="flex h-[24px] items-center justify-end pt-[2px] pr-[172px] text-[11px] whitespace-pre text-black">aSc Разписание на часовете 2019  - [document1]</div>
      <Bell className="absolute top-[7px] left-[5px] h-[31px] w-[29px]" />
      <nav className="flex h-[23px] items-stretch gap-[28px] bg-[#efefef] pt-px pl-[43px] text-[11px] whitespace-nowrap text-[#0b0b6e]">
        <button type="button" className="-mt-px -mr-[12px] w-[72px] border-t border-[#b8b8b8] bg-white font-bold">Основен</button>
        {['Файл', 'Задание', 'Виж', 'Разписание', 'Възможности', 'Помощ'].map(t => <button type="button" key={t}>{t}</button>)}
      </nav>
      <Ribbon />
      <div className="flex h-[25px] items-end bg-[#87a8d6] pl-[1px]"><DocTab active /><DocTab /></div>
      <div className="h-[4px] bg-[#ffbb66]" />
      <div className="flex flex-1 overflow-hidden border-l-2 border-[#ffbb66]">
        <div className="w-0 flex-1 overflow-hidden border-t border-l border-[#5a5a5a] bg-[#cecdd2]"><Timetable /></div>
      </div>
      <div className="h-[4px] bg-[#e8e8e8]" />

      <RelationsWindow />
      <AdvancedDialog />

      <svg viewBox="0 0 200 140" className="pointer-events-none absolute top-[128px] left-[550px] h-[140px] w-[200px]" aria-hidden="true">
        <path d="M197 4C180 60 160 108 115 119C85 126 30 127 6 127M24 118L5 127L21 136" fill="none" stroke="#ed1c24" strokeWidth="3" strokeLinecap="round" strokeLinejoin="round" />
      </svg>
      <span className={`${STEP} top-[104px] left-[693px]`}>1.</span>
      <span className={`${STEP} top-[559px] left-[230px]`}>2.</span>
      <span className={`${STEP} top-[410px] left-[1102px]`}>3.</span>
      <span className={`${STEP} top-[466px] left-[806px]`}>4.</span>
      <span className={`${STEP} top-[768px] left-[667px]`}>5.</span>
      <span className={`${STEP} top-[768px] left-[969px]`}>6.</span>
      <span className={`${STEP} top-[973px] left-[696px]`}>7.</span>
    </main>
  );
}
